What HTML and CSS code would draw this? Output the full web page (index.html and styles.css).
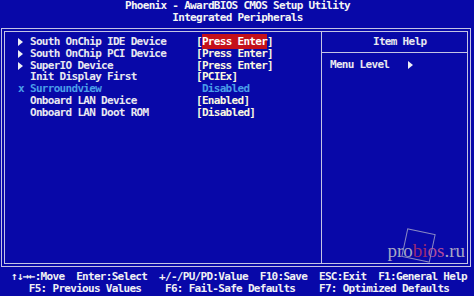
FILE: index.html
```html
<!DOCTYPE html>
<html>

<head>
    <title>Phoenix - AwardBIOS CMOS Setup Utility</title>
    <link rel="stylesheet" href="styles.css">
</head>

<body>
    <div class="title">
        <div>Phoenix - AwardBIOS CMOS Setup Utility</div>
        <div>Integrated Peripherals</div>
    </div>

    <div class="screen">
        <div class="items">
            <div class="row">
                <span class="mark"><i class="arrow"></i></span>
                <span class="name">South OnChip IDE Device</span>
                <span class="value">[<span class="selected">Press Enter</span>]</span>
            </div>
            <div class="row">
                <span class="mark"><i class="arrow"></i></span>
                <span class="name">South OnChip PCI Device</span>
                <span class="value">[Press Enter]</span>
            </div>
            <div class="row">
                <span class="mark"><i class="arrow"></i></span>
                <span class="name">SuperIO Device</span>
                <span class="value">[Press Enter]</span>
            </div>
            <div class="row">
                <span class="mark"></span>
                <span class="name">Init Display First</span>
                <span class="value">[PCIEx]</span>
            </div>
            <div class="row disabled">
                <span class="mark">x</span>
                <span class="name">Surroundview</span>
                <span class="value">&nbsp;Disabled</span>
            </div>
            <div class="row">
                <span class="mark"></span>
                <span class="name">Onboard LAN Device</span>
                <span class="value">[Enabled]</span>
            </div>
            <div class="row">
                <span class="mark"></span>
                <span class="name">Onboard LAN Doot ROM</span>
                <span class="value">[Disabled]</span>
            </div>
        </div>

        <div class="help">
            <div class="help_title">Item Help</div>
            <div class="help_body">
                <div class="menu_level">Menu Level<i class="arrow"></i></div>
                <div class="watermark">
                    <i class="frame"></i>
                    <span class="wm_gray">pro</span><span class="wm_red">bi</span><span class="wm_pink">os</span><span class="wm_gray">.ru</span>
                </div>
            </div>
        </div>
    </div>

    <pre class="footer">↑↓→←:Move  Enter:Select  +/-/PU/PD:Value  F10:Save  ESC:Exit  F1:General Help
   F5: Previous Values    F6: Fail-Safe Defaults    F7: Optimized Defaults</pre>
</body>

</html>
```
FILE: styles.css
```css
body {
    margin: 0;
    width: 474px;
    height: 296px;
    overflow: hidden;
    background-color: #0808a8;
    color: #e8e8f0;
    font-family: "DejaVu Sans Mono", "Liberation Mono", monospace;
    font-size: 11px;
    font-weight: bold;
    letter-spacing: -0.7px;
}

.title {
    height: 28px;
    padding-left: 1px;
    box-sizing: border-box;
    text-align: center;
    line-height: 12px;
    color: #f4f4f4;
}

.screen {
    display: flex;
    width: 470px;
    height: 239px;
    margin-left: 1px;
    box-sizing: border-box;
    border: 4px double #c4c4e4;
}

.items {
    width: 317px;
    padding-top: 4px;
    padding-left: 7px;
    border-right: 1px solid #c4c4e4;
    box-sizing: border-box;
}

.row {
    display: grid;
    grid-template-columns: 18px 166px auto;
    height: 11.8px;
    line-height: 11.8px;
    white-space: pre;
}

.mark {
    padding-left: 6px;
}

.arrow {
    display: inline-block;
    width: 0;
    height: 0;
    border-top: 4px solid transparent;
    border-bottom: 4px solid transparent;
    border-left: 5px solid #eeeef4;
    vertical-align: -1px;
}

.value {
    color: #fbf8e0;
}

.selected {
    background-color: #c4101a;
    color: #ffffff;
    padding: 1px 0;
}

.disabled,
.disabled .value {
    color: #4a9ee8;
}

.help {
    flex: 1;
    display: flex;
    flex-direction: column;
}

.help_title {
    height: 21px;
    padding-top: 4px;
    padding-left: 51px;
    line-height: 11.8px;
    box-sizing: border-box;
    border-bottom: 1px solid #c4c4e4;
}

.help_body {
    flex: 1;
    position: relative;
    padding-left: 8px;
    padding-top: 6px;
}

.menu_level {
    line-height: 11.8px;
}

.menu_level .arrow {
    margin-left: 19px;
}

.watermark {
    position: absolute;
    right: 2px;
    bottom: 3px;
    font-family: "Liberation Serif", serif;
    font-weight: normal;
    font-size: 19px;
    letter-spacing: 0;
    line-height: 19px;
}

.frame {
    position: absolute;
    left: 17px;
    top: -10px;
    width: 27px;
    height: 27px;
    border: 1px solid #8a8ac4;
    transform: rotate(12deg);
}

.wm_gray {
    color: #a6a6c4;
}

.wm_red {
    color: #9a2a70;
}

.wm_pink {
    color: #b24a9a;
}

.footer {
    margin: 0;
    padding-top: 4px;
    padding-left: 11px;
    font-family: inherit;
    line-height: 12px;
    color: #f0f0f4;
}
```
